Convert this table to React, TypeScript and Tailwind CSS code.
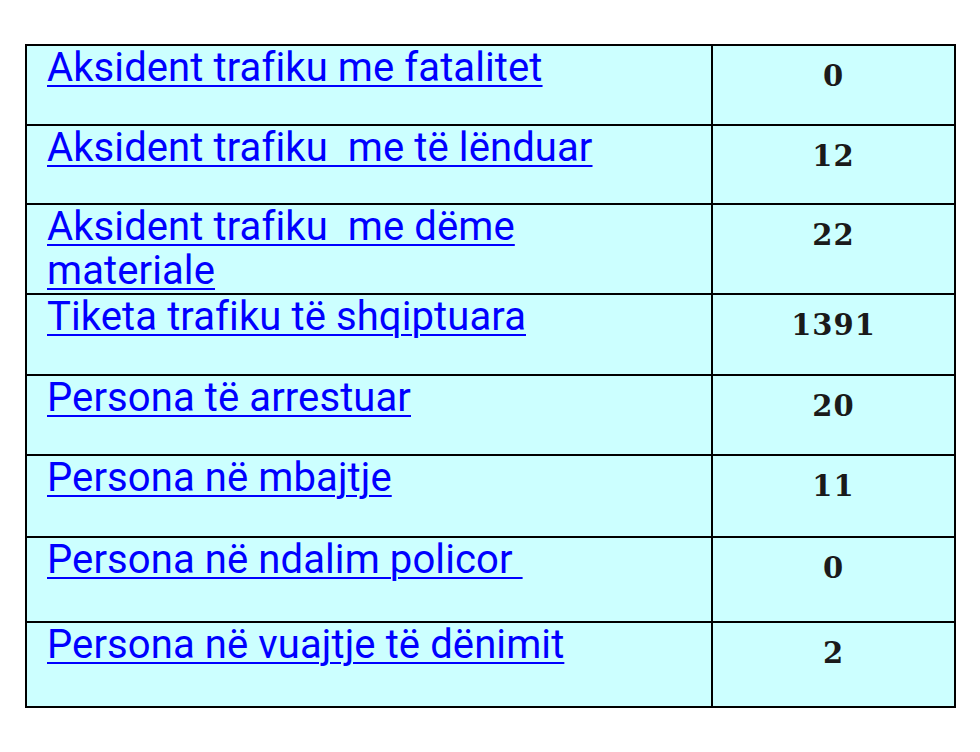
import React from "react";

const rows: { label: React.ReactNode; value: string; h: string }[] = [
  { label: "Aksident trafiku me fatalitet", value: "0", h: "h-[80px]" },
  { label: "Aksident trafiku\u00a0 me të lënduar", value: "12", h: "h-[79px]" },
  {
    label: (
      <>
        Aksident trafiku&nbsp; me dëme
        <br />
        materiale
      </>
    ),
    value: "22",
    h: "h-[90px]",
  },
  { label: "Tiketa trafiku të shqiptuara", value: "1391", h: "h-[81px]" },
  { label: "Persona të arrestuar", value: "20", h: "h-[80px]" },
  { label: "Persona në mbajtje", value: "11", h: "h-[82px]" },
  { label: "Persona në ndalim policor\u00a0", value: "0", h: "h-[85px]" },
  { label: "Persona në vuajtje të dënimit", value: "2", h: "h-[85px]" },
];

export default function App() {
  return (
    <div className="w-[980px] h-[752px] bg-white pt-[44px] pl-[25px]">
      <table className="border-collapse border-2 border-black w-[931px] bg-[#ccffff]">
        <tbody>
          {rows.map((r, i) => (
            <tr key={i} className={r.h}>
              <td className="w-[686px] border-2 border-black align-top pl-[20px] pr-2 py-0 font-['Roboto',sans-serif] text-[40px] leading-[44px] tracking-[0.1px]">
                <a href="#" className="text-[#0000ff] underline underline-offset-[4px] decoration-[2px] whitespace-pre-wrap">
                  {r.label}
                </a>
              </td>
              <td className="border-2 border-black align-top text-center pt-[14px] font-['DejaVu_Serif',serif] font-bold text-[29px] leading-[32px] tracking-[1px] text-[#1a1a1a]">
                {r.value}
              </td>
            </tr>
          ))}
        </tbody>
      </table>
    </div>
  );
}
